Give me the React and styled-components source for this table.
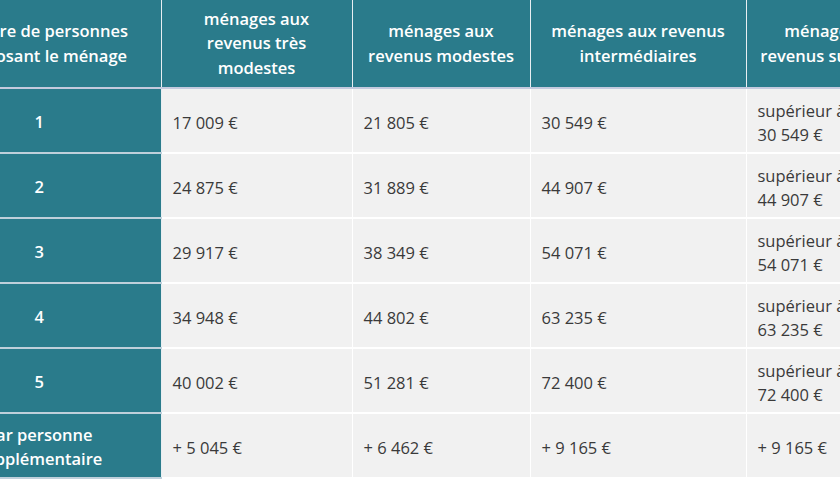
import React from "react";
import styled, { createGlobalStyle } from "styled-components";

const GlobalStyle = createGlobalStyle`
  html, body {
    margin: 0;
    padding: 0;
    background: #ffffff;
    overflow: hidden;
  }
  body {
    font-family: "Open Sans", "Liberation Sans", sans-serif;
  }
  th, td {
    box-sizing: border-box;
  }
`;

const Frame = styled.div`
  width: 840px;
  height: 480px;
  overflow: hidden;
`;

const Table = styled.table`
  margin-left: -82px;
  border-collapse: collapse;
  table-layout: fixed;
  width: 1010px;
`;

const HeadCell = styled.th`
  width: ${(p) => p.$w}px;
  height: 88px;
  padding: 0 8px;
  background: #2a7b8b;
  color: #ffffff;
  font-size: 16.5px;
  font-weight: 600;
  line-height: 24.5px;
  text-align: center;
  vertical-align: middle;
  border-right: 1.5px solid #e8eef2;
  border-bottom: 2px solid #c4cade;
`;

const SideCell = styled.th`
  height: 65px;
  padding: 3px 8px 0;
  background: #2a7b8b;
  color: #ffffff;
  font-size: 16.5px;
  font-weight: 600;
  line-height: 24.5px;
  text-align: center;
  vertical-align: middle;
  border-right: 1.5px solid #e8eef2;
  border-bottom: 2px solid #bfd0db;
`;

const Cell = styled.td`
  height: 65px;
  padding: 4px 11px 0;
  background: #f1f1f1;
  color: #3a3a3a;
  font-size: 16.5px;
  font-weight: 400;
  line-height: 24px;
  text-align: left;
  vertical-align: middle;
  border-right: 1.5px solid #ffffff;
  border-bottom: 2px solid #ffffff;
`;

const columns = [
  { w: 243, label: "Nombre de personnes composant le ménage" },
  { w: 191, label: <>ménages aux<br />revenus très<br />modestes</> },
  { w: 178, label: <>ménages aux<br />revenus modestes</> },
  { w: 216, label: <>ménages aux revenus<br />intermédiaires</> },
  { w: 182, label: <>ménages aux<br />revenus supérieurs</> },
];

const rows = [
  { n: "1", v: ["17 009 €", "21 805 €", "30 549 €"] },
  { n: "2", v: ["24 875 €", "31 889 €", "44 907 €"] },
  { n: "3", v: ["29 917 €", "38 349 €", "54 071 €"] },
  { n: "4", v: ["34 948 €", "44 802 €", "63 235 €"] },
  { n: "5", v: ["40 002 €", "51 281 €", "72 400 €"] },
];

export default function App() {
  return (
    <Frame>
      <GlobalStyle />
      <Table>
        <thead>
          <tr>
            {columns.map((c, i) => (
              <HeadCell key={i} $w={c.w}>
                {c.label}
              </HeadCell>
            ))}
          </tr>
        </thead>
        <tbody>
          {rows.map((r) => (
            <tr key={r.n}>
              <SideCell>{r.n}</SideCell>
              {r.v.map((v, i) => (
                <Cell key={i}>{v}</Cell>
              ))}
              <Cell>
                supérieur à<br />
                {r.v[2]}
              </Cell>
            </tr>
          ))}
          <tr>
            <SideCell>
              Par personne
              <br />
              supplémentaire
            </SideCell>
            <Cell>+ 5 045 €</Cell>
            <Cell>+ 6 462 €</Cell>
            <Cell>+ 9 165 €</Cell>
            <Cell>+ 9 165 €</Cell>
          </tr>
        </tbody>
      </Table>
    </Frame>
  );
}
